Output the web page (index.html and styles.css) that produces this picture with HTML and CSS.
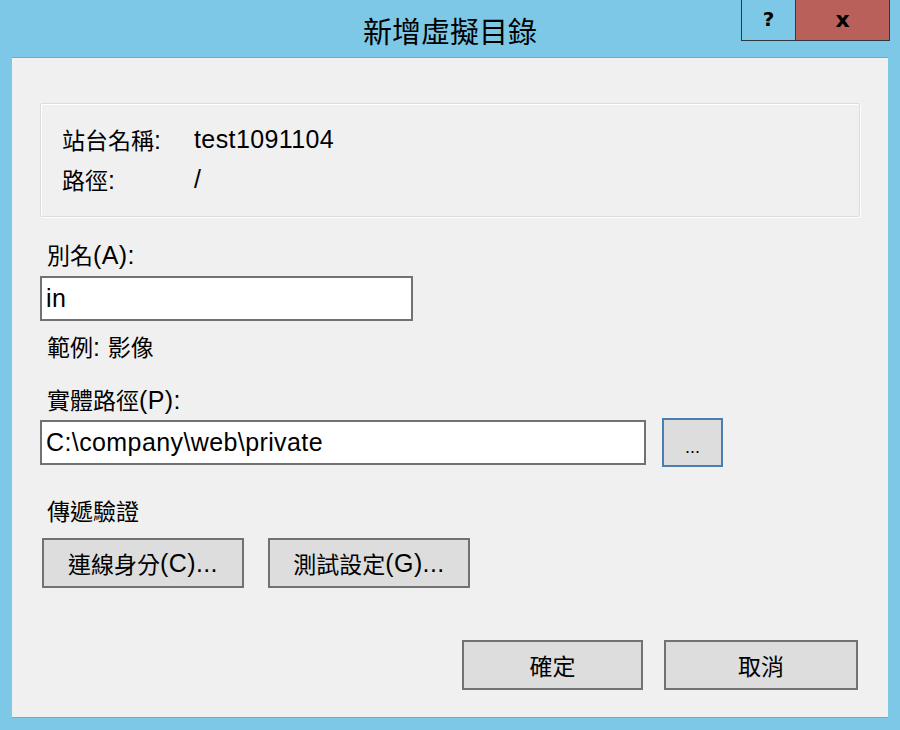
FILE: index.html
```html
<!DOCTYPE html>
<html lang="zh-Hant">
<head>
<meta charset="utf-8">
<title>新增虛擬目錄</title>
<link rel="stylesheet" href="styles.css">
</head>
<body>
<div class="window">
  <div class="titlebar">
    <div class="title">新增虛擬目錄</div>
    <div class="controls">
      <div class="ctl help">?</div>
      <div class="ctl close">x</div>
    </div>
  </div>
  <div class="client">
    <div class="group">
      <div class="grow"><span class="gl">站台名稱<span class="lat">:</span></span><span class="lat">test1091104</span></div>
      <div class="grow"><span class="gl">路徑<span class="lat">:</span></span><span class="lat">/</span></div>
    </div>
    <div class="label l-alias">別名<span class="lat">(A):</span></div>
    <div class="field alias"><span class="lat">in</span></div>
    <div class="label l-example">範例<span class="lat">: </span>影像</div>
    <div class="label l-path">實體路徑<span class="lat">(P):</span></div>
    <div class="pathrow">
      <div class="field path"><span class="lat">C:\company\web\private</span></div>
      <div class="browse"><span class="lat">...</span></div>
    </div>
    <div class="label l-pass">傳遞驗證</div>
    <div class="btnrow">
      <div class="btn wide">連線身分<span class="lat">(C)...</span></div>
      <div class="btn wide">測試設定<span class="lat">(G)...</span></div>
    </div>
    <div class="okrow">
      <div class="btn ok">確定</div>
      <div class="btn cancel">取消</div>
    </div>
  </div>
</div>
</body>
</html>
```

FILE: styles.css
```css
* { box-sizing: border-box; }
html, body {
  margin: 0;
  padding: 0;
  background: #7dc8e6;
}
body {
  width: 900px;
  height: 730px;
  overflow: hidden;
  font-family: "Liberation Sans", "Noto Sans CJK TC", sans-serif;
  font-size: 23px;
  color: #000;
}
.lat {
  font-family: "Liberation Sans", sans-serif;
  font-size: 25px;
  letter-spacing: 0.4px;
}
.window {
  width: 900px;
  height: 730px;
}
.titlebar {
  position: relative;
  height: 57px;
  display: flex;
  justify-content: center;
  align-items: center;
}
.title {
  font-family: "Noto Sans CJK TC", sans-serif;
  font-size: 29px;
  margin-top: 2px;
  color: #000;
}
.controls {
  position: absolute;
  top: 0;
  right: 10px;
  display: flex;
  height: 41px;
  border: 1px solid #2e3a42;
  border-top: none;
}
.ctl {
  display: flex;
  align-items: center;
  justify-content: center;
  font-family: "DejaVu Sans", sans-serif;
  font-weight: bold;
  font-size: 20px;
  padding-bottom: 2px;
}
.help {
  width: 54px;
  border-right: 1px solid #3a3a3a;
}
.close {
  width: 93px;
  background: #b9605a;
  font-size: 22px;
}
.client {
  margin: 0 12px;
  height: 661px;
  background: #f0f0f0;
  border-top: 1px solid #8ba2b4;
  border-bottom: 1px solid #8ba2b4;
  padding-top: 45px;
  display: flex;
  flex-direction: column;
}
.group {
  margin-left: 28px;
  width: 820px;
  height: 114px;
  border: 1px solid #d6dde3;
  border-radius: 2px;
  box-shadow: inset 1px 1px 0 #fff, 1px 1px 0 #fff;
  padding: 15px 0 0 21px;
}
.grow {
  display: flex;
  align-items: center;
  height: 40px;
}
.gl {
  width: 132px;
}
.label {
  margin-left: 35px;
  height: 30px;
  line-height: 30px;
  white-space: nowrap;
}
.l-alias { margin-top: 23px; }
.field {
  background: #fff;
  border: 2px solid #727272;
  height: 45px;
  display: flex;
  align-items: center;
  padding-left: 4px;
  padding-bottom: 1px;
}
.alias {
  margin-left: 28px;
  margin-top: 6px;
  width: 373px;
}
.l-example { margin-top: 11px; }
.l-path { margin-top: 23px; }
.pathrow {
  margin-left: 28px;
  margin-top: 3px;
  height: 49px;
  display: flex;
  align-items: center;
}
.path {
  width: 606px;
}
.browse {
  margin-left: 16px;
  width: 61px;
  height: 49px;
  background: #dddddd;
  border: 2px solid #4a7eb0;
  display: flex;
  justify-content: center;
  align-items: center;
}
.browse .lat {
  font-size: 18px;
  letter-spacing: 0;
  margin-top: 10px;
}
.l-pass { margin-top: 30px; }
.btnrow {
  margin-left: 30px;
  margin-top: 11px;
  display: flex;
  gap: 24px;
}
.btn {
  height: 50px;
  background: #dddddd;
  border: 2px solid #727272;
  display: flex;
  justify-content: center;
  align-items: center;
  white-space: nowrap;
}
.wide { width: 202px; }
.okrow {
  margin-top: 52px;
  margin-left: 450px;
  display: flex;
  gap: 21px;
}
.ok { width: 181px; }
.cancel { width: 194px; }
```
